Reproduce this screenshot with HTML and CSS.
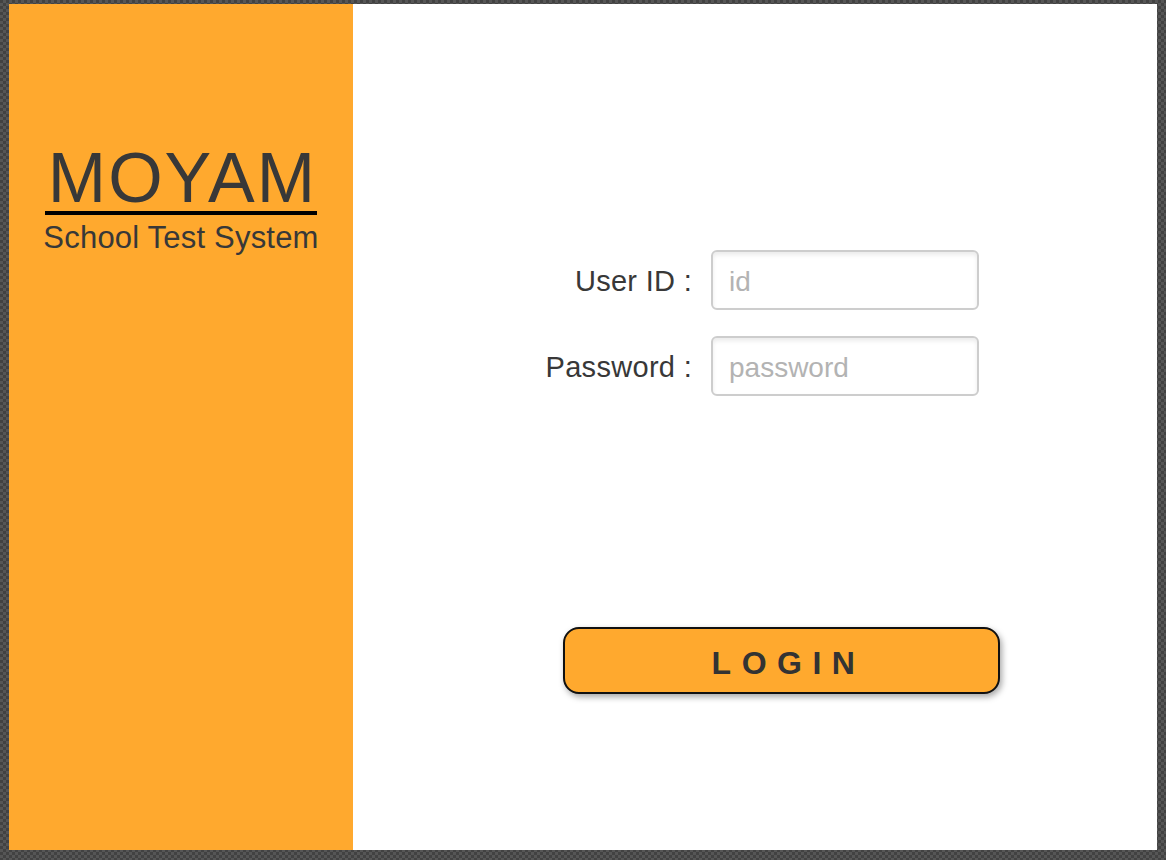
FILE: index.html
```html
<!DOCTYPE html>
<html lang="en">
<head>
<meta charset="utf-8">
<title>MOYAM - School Test System</title>
<link rel="stylesheet" href="styles.css">
</head>
<body>
<div class="frame">
  <aside class="sidebar">
    <div class="brand">
      <div class="brand-name">MOYAM</div>
      <div class="brand-sub">School Test System</div>
    </div>
  </aside>
  <main class="content">
    <form class="login-form" onsubmit="return false;">
      <div class="fields">
        <label class="field-label" for="uid">User ID :</label>
        <input class="field-input" id="uid" type="text" placeholder="id">
        <label class="field-label" for="pwd">Password :</label>
        <input class="field-input" id="pwd" type="password" placeholder="password">
      </div>
      <button class="login-btn" type="submit">LOGIN</button>
    </form>
  </main>
</div>
</body>
</html>
```
FILE: styles.css
```css
html, body {
  height: 100%;
}
body {
  margin: 0;
  box-sizing: border-box;
  padding: 4px 9px 10px 9px;
  background-color: #4b4b4b;
  background-image: repeating-conic-gradient(#565656 0 25%, #424242 0 50%);
  background-size: 6px 6px;
  font-family: "Liberation Sans", Arial, sans-serif;
  color: #333;
}
.frame {
  display: flex;
  height: 100%;
}
.sidebar {
  width: 344px;
  flex: none;
  background: #ffa92e;
  display: flex;
  justify-content: center;
  align-items: flex-start;
  padding-top: 142px;
  box-sizing: border-box;
}
.brand {
  display: flex;
  flex-direction: column;
  align-items: center;
}
.brand-name {
  font-size: 70px;
  line-height: 65px;
  letter-spacing: 2px;
  padding-left: 3px;
  border-bottom: 4px solid #000;
  color: #383838;
}
.brand-sub {
  font-size: 31px;
  line-height: 34px;
  letter-spacing: 0.2px;
  margin-top: 6px;
  color: #383838;
}
.content {
  flex: 1;
  background: #fff;
  padding: 246px 0 0 139px;
  box-sizing: border-box;
}
.login-form {
  display: flex;
  flex-direction: column;
}
.fields {
  display: grid;
  grid-template-columns: 200px 268px;
  column-gap: 19px;
  row-gap: 26px;
  align-items: center;
}
.field-label {
  text-align: right;
  font-size: 29px;
  letter-spacing: 0.3px;
  padding-top: 3px;
  color: #383838;
}
.field-input {
  box-sizing: border-box;
  width: 268px;
  height: 60px;
  border: 2px solid #cdcdcd;
  border-radius: 6px;
  padding: 4px 0 0 16px;
  font-family: "Liberation Sans", Arial, sans-serif;
  font-size: 28px;
  color: #333;
  background: #fff;
  box-shadow: inset 0 3px 4px rgba(0, 0, 0, 0.08);
  outline: none;
}
.field-input::placeholder {
  color: #b3b3b3;
}
.login-btn {
  margin: 231px 0 0 71px;
  width: 437px;
  height: 67px;
  box-sizing: border-box;
  border: 2px solid #111;
  border-radius: 16px;
  background: #ffa92e;
  box-shadow: 2px 3px 6px rgba(0, 0, 0, 0.35);
  font-family: "Liberation Sans", Arial, sans-serif;
  font-weight: bold;
  font-size: 32px;
  letter-spacing: 10.5px;
  text-indent: 14px;
  color: #333;
  padding: 5px 0 0 0;
  cursor: pointer;
}
```
